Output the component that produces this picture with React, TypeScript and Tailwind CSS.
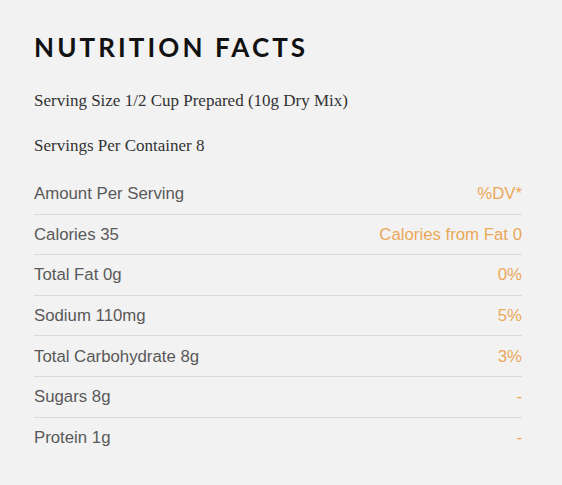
import React from "react";

const rows: [string, string][] = [
  ["Amount Per Serving", "%DV*"],
  ["Calories 35", "Calories from Fat 0"],
  ["Total Fat 0g", "0%"],
  ["Sodium 110mg", "5%"],
  ["Total Carbohydrate 8g", "3%"],
  ["Sugars 8g", "-"],
  ["Protein 1g", "-"],
];

export default function App() {
  return (
    <div className="w-[562px] h-[485px] bg-[#f2f2f2] pl-[34px] pr-[40px] pt-[31px]">
      <h1
        className="text-[26px] leading-[32px] font-bold tracking-[3.1px] text-[#111]"
        style={{ fontFamily: "Lato, sans-serif" }}
      >
        NUTRITION FACTS
      </h1>
      <div
        className="mt-[27px] text-[17px] leading-[22px] text-[#333]"
        style={{ fontFamily: "'Liberation Serif', serif" }}
      >
        <p>Serving Size 1/2 Cup Prepared (10g Dry Mix)</p>
        <p className="mt-[23px]">Servings Per Container 8</p>
      </div>
      <div className="mt-[17px]" style={{ fontFamily: "'Liberation Sans', Arial, sans-serif" }}>
        {rows.map(([l, r], i) => (
          <div
            key={i}
            className={`flex justify-between items-center h-[40.6px] text-[16.8px] ${
              i < rows.length - 1 ? "border-b border-[#d9d9d9]" : ""
            }`}
          >
            <span className="text-[#595959]">{l}</span>
            <span className="text-[#eba858]">{r}</span>
          </div>
        ))}
      </div>
    </div>
  );
}
